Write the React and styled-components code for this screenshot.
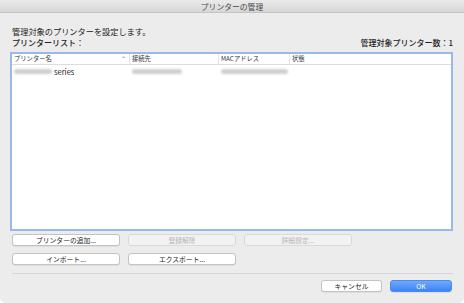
import React from 'react';
import styled, { createGlobalStyle } from 'styled-components';

const Global = createGlobalStyle`
  html, body {
    margin: 0;
    padding: 0;
    background: #ffffff;
  }
  body {
    font-family: "Noto Sans CJK JP", "Noto Sans", sans-serif;
    -webkit-font-smoothing: antialiased;
  }
`;

const Window = styled.div`
  width: 464px;
  height: 303px;
  background: #ececec;
  border-radius: 0 0 5px 5px;
  display: flex;
  flex-direction: column;
  overflow: hidden;
  box-sizing: border-box;
`;

const TitleBar = styled.div`
  height: 13px;
  flex: none;
  background: linear-gradient(#ebebeb, #d6d6d6);
  border-bottom: 1px solid #c4c4c4;
  display: flex;
  align-items: center;
  justify-content: center;
  font-size: 7.8px;
  color: #4a4a4a;
  box-sizing: border-box;
`;

const Content = styled.div`
  flex: 1;
  display: flex;
  flex-direction: column;
  padding: 12px 11px 0 10px;
`;

const Description = styled.div`
  font-size: 8.2px;
  line-height: 12px;
  color: #222;
  padding-left: 2px;
`;

const LabelRow = styled.div`
  display: flex;
  justify-content: space-between;
  font-size: 8px;
  line-height: 12px;
  color: #222;
  padding: 0 0 3px 2px;
  font-weight: 500;
`;

const ListBox = styled.div`
  height: 179px;
  background: #fff;
  border: 2px solid #98b9ee;
  box-sizing: border-box;
  display: flex;
  flex-direction: column;
`;

const HeaderRow = styled.div`
  display: grid;
  grid-template-columns: 117px 89px 71px 1fr;
  height: 10px;
  border-bottom: 1px solid #dcdcdc;
  font-size: 6.3px;
  color: #333;
`;

const HeaderCell = styled.div`
  display: flex;
  align-items: center;
  justify-content: space-between;
  padding: 0 3px 0 2px;
  border-left: ${p => (p.$first ? 'none' : '1px solid #e4e4e4')};
  line-height: 10px;
`;

const SortArrow = styled.span`
  font-size: 6px;
  color: #666;
`;

const DataRow = styled.div`
  display: grid;
  grid-template-columns: 117px 89px 71px 1fr;
  height: 13px;
  align-items: center;
  font-size: 7.5px;
  color: #222;
`;

const Cell = styled.div`
  display: flex;
  align-items: center;
  gap: 2px;
  padding-left: ${p => (p.$first ? '2px' : '3px')};
`;

const Blur = styled.span`
  display: inline-block;
  width: ${p => p.$w}px;
  height: 5px;
  border-radius: 3px;
  background: #cfcfcf;
  filter: blur(1.2px);
`;

const ButtonGrid = styled.div`
  display: grid;
  grid-template-columns: repeat(3, 108px);
  column-gap: 8px;
  row-gap: 7px;
  margin: 3px 0 0 2px;
`;

const Button = styled.button`
  height: 12px;
  padding: 0;
  border-radius: 3px;
  border: 1px solid ${p => (p.disabled ? '#dadada' : '#c3c3c3')};
  background: ${p => (p.disabled ? '#f2f2f2' : '#ffffff')};
  color: ${p => (p.disabled ? '#b8b8b8' : '#222')};
  font-family: inherit;
  font-size: 6.8px;
  line-height: 10px;
  box-shadow: ${p => (p.disabled ? 'none' : '0 0.5px 0.5px rgba(0,0,0,0.12)')};
`;

const Separator = styled.div`
  height: 1px;
  background: #d6d6d6;
  margin: 8px 0 0 2px;
`;

const Footer = styled.div`
  display: flex;
  justify-content: flex-end;
  gap: 8px;
  margin-top: 6px;
  padding-right: 1px;
`;

const FooterButton = styled.button`
  width: ${p => p.$w}px;
  height: 12px;
  padding: 0;
  border-radius: 3px;
  font-family: inherit;
  font-size: 6.8px;
  line-height: 10px;
  border: 1px solid ${p => (p.$primary ? '#4a8af2' : '#c3c3c3')};
  background: ${p => (p.$primary ? 'linear-gradient(#6fabfa, #3d83f6)' : '#fff')};
  color: ${p => (p.$primary ? '#fff' : '#222')};
  box-shadow: 0 0.5px 0.5px rgba(0,0,0,0.12);
`;

export default function App() {
  return (
    <>
      <Global />
      <Window>
        <TitleBar>プリンターの管理</TitleBar>
        <Content>
          <Description>管理対象のプリンターを設定します。</Description>
          <LabelRow>
            <span>プリンターリスト：</span>
            <span>管理対象プリンター数：1</span>
          </LabelRow>
          <ListBox>
            <HeaderRow>
              <HeaderCell $first>
                <span>プリンター名</span>
                <SortArrow>⌃</SortArrow>
              </HeaderCell>
              <HeaderCell>接続先</HeaderCell>
              <HeaderCell>MACアドレス</HeaderCell>
              <HeaderCell>状態</HeaderCell>
            </HeaderRow>
            <DataRow>
              <Cell $first>
                <Blur $w={38} />
                <span>series</span>
              </Cell>
              <Cell>
                <Blur $w={50} />
              </Cell>
              <Cell>
                <Blur $w={67} />
              </Cell>
              <Cell />
            </DataRow>
          </ListBox>
          <ButtonGrid>
            <Button>プリンターの追加...</Button>
            <Button disabled>登録解除</Button>
            <Button disabled>詳細設定...</Button>
            <Button>インポート...</Button>
            <Button>エクスポート...</Button>
          </ButtonGrid>
          <Separator />
          <Footer>
            <FooterButton $w={61}>キャンセル</FooterButton>
            <FooterButton $w={62} $primary>OK</FooterButton>
          </Footer>
        </Content>
      </Window>
    </>
  );
}
